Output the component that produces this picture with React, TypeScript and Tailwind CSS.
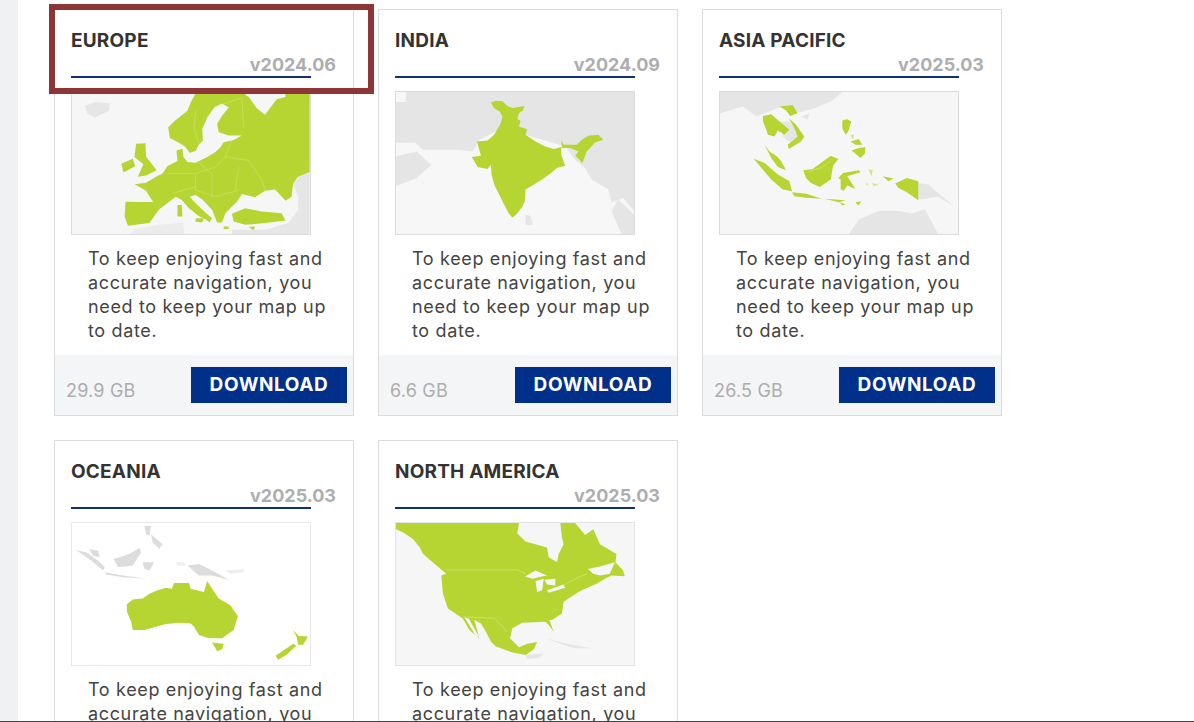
const G = "#b7d532";
const L = "#e5e5e5";
const W = "#d3e67f";

function Frame({ vb, bg, border = "border-[#dcdcdc]", children }: { vb: string; bg: string; border?: string; children: React.ReactNode }) {
  return (
    <div className={`w-[240px] h-[144px] border ${border} ml-[16px] mt-[13px] overflow-hidden`} style={{ background: bg }}>
      <svg viewBox={vb} preserveAspectRatio="none" className="block w-full h-full blur-[0.5px]">
        {children}
      </svg>
    </div>
  );
}

function Europe() {
  const bg = "#f6f6f6";
  return (
    <Frame vb="216 273 720 430" bg={bg}>
      <path fill="#e6e6e6" d="M255 315L290 303L330 308L328 330L285 350L262 338Z" />
      <path fill="#e6e6e6" d="M935 515L905 528L885 550L900 590L900 630L870 670L800 690L700 690L700 703L935 703Z" />
      <path fill="#ececec" d="M390 703L410 688L480 675L552 668L556 703Z" />
      <path fill={G} d="M592 273L575 305L565 330L530 358L507 380L512 412L545 430L560 440L572 457L590 452L600 432L612 420L610 385L625 350L648 318L670 308L690 320L670 345L655 370L660 395L690 405L730 405L705 418L675 425L665 440L650 455L625 470L590 487L565 485L553 470L550 445L532 450L535 482L505 497L490 520L470 530L440 548L405 552L440 572L452 592L462 606L420 606L378 605L375 650L385 678L450 670L480 628L510 605L530 590L548 600L570 625L598 648L622 660L632 668L640 655L622 640L590 610L572 590L590 585L612 600L640 630L655 668L670 668L680 640L700 620L715 605L730 582L770 592L800 572L830 568L862 602L880 590L885 550L900 530L935 515L935 273L860 273L862 288L835 295L800 342L775 322L752 290L730 273Z" />
      <path fill={G} d="M700 642L740 625L790 635L850 640L862 662L800 670L740 675L705 665Z" />
      <path fill={G} d="M410 430L438 428L440 468L472 510L440 526L415 530L432 492L405 470Z" />
      <path fill={G} d="M365 490L400 475L407 498L372 517Z" />
      <path fill={G} d="M535 615L548 615L550 650L535 650ZM592 655L615 655L610 668L588 665ZM675 680L690 680L690 688L675 688ZM750 682L770 680L765 692Z" />
      <path fill={bg} d="M620 405L640 400L640 430L625 440Z" />
      <path fill="none" stroke={W} strokeWidth="1.5" d="M505 520L590 520L650 500L680 470L750 480L790 540L800 570M590 520L590 570L650 590L720 570M680 470L690 440L700 420M600 487L640 520L640 590M520 580L590 560M720 500L710 570M590 330L585 380L600 432M650 318L730 290L735 380" />
    </Frame>
  );
}

function India() {
  return (
    <Frame vb="48 36 720 428" bg="#f7f7f7">
      <path fill={L} d="M78 36L768 36L768 395L735 355L700 370L690 330L640 300L620 265L590 240L560 200L440 165L360 150L300 180L280 215L240 210L130 210L105 190L48 190L48 66L78 66Z" />
      <path fill={L} d="M48 230L110 215L155 255L110 295L48 320Z" />
      <path fill={L} d="M700 395L720 360L768 405L768 464L730 464Z" />
      <path fill={L} d="M440 405L455 410L462 435L440 438Z" />
      <path fill={G} d="M335 68L350 62L370 64L385 78L400 84L437 78L432 92L420 100L415 118L425 122L420 140L445 148L440 165L470 185L500 200L525 208L548 202L548 225L555 245L560 258L535 265L515 282L490 300L460 318L440 330L438 365L430 382L412 405L400 415L388 400L375 375L360 345L345 315L337 285L335 255L325 268L295 262L285 245L277 232L305 228L293 185L325 182L345 165L365 130L370 110L362 95L345 85Z" />
      <path fill={G} d="M548 182L555 195L595 195L610 180L630 168L660 165L675 180L650 188L635 205L625 215L612 250L598 235L590 228L600 215L575 205L550 205Z" />
    </Frame>
  );
}

function Asia() {
  return (
    <Frame vb="60 36 720 428" bg="#f6f6f6">
      <path fill={L} d="M60 36L430 36L400 62L345 85L300 98L250 78L170 110L130 80L60 100Z" />
      <path fill={L} d="M240 125L270 125L315 175L280 195L250 170Z" />
      <path fill={L} d="M308 110L330 100L325 120Z" />
      <path fill={L} d="M660 310L690 315L765 378L720 352L660 360Z" />
      <path fill={L} d="M450 464L480 420L540 395L600 395L640 402L680 390L720 464Z" />
      <path fill={G} d="M240 80L280 75L295 100L272 108L260 92ZM190 108L215 103L240 125L270 150L255 165L235 152L225 170L205 165L200 150L190 125ZM268 115L290 135L315 170L305 185L268 208L265 195L295 170L285 145ZM195 195L210 215L232 230L245 245L260 272L235 262L215 235ZM162 237L195 250L235 285L270 305L278 335L250 330L215 300L190 270Z" />
      <path fill={G} d="M312 272L340 268L365 250L395 228L418 238L402 258L395 300L362 322L335 310L320 295Z" />
      <path fill="none" stroke={W} strokeWidth="2" d="M325 275L365 265L395 245" />
      <path fill={G} d="M278 338L320 343L368 358L320 355L285 350ZM375 358L440 362L420 368ZM422 368L440 375L430 378ZM470 368L488 365L478 378Z" />
      <path fill={G} d="M430 122L445 118L457 125L448 155L440 165L430 145ZM455 185L480 178L490 195L470 195ZM458 212L480 205L500 202L498 222L485 235L470 222Z" />
      <path fill={G} d="M418 295L432 280L480 272L485 278L445 290L470 328L445 318L435 333L425 330L425 300Z" />
      <path fill={G} d="M552 290L585 297L570 305ZM590 312L625 295L660 305L660 362L625 338L600 325Z" />
      <path fill={W} d="M510 270L522 270L518 290ZM500 312L510 312L505 318ZM520 310L540 315L525 320ZM455 165L465 165L462 180Z" />
    </Frame>
  );
}

function Oceania() {
  return (
    <Frame vb="66 36 720 430" bg="#ffffff" border="border-[#e8e8e8]">
      <path fill="#dcdcdc" d="M78 118L110 125L145 150L165 170L160 180L125 150ZM118 115L145 120L150 140L130 135ZM192 145L240 130L270 112L275 125L250 165L205 170ZM165 185L220 195L290 205L220 200L170 192ZM285 45L305 45L300 75L290 70ZM305 70L340 100L330 115L310 95ZM280 155L315 155L300 180L285 175ZM415 165L450 160L500 185L540 208L490 195L450 195Z" />
      <path fill="#eeeeee" d="M380 155L405 155L410 165L385 165ZM530 180L585 175L585 185L545 190Z" />
      <path fill={G} d="M232 282L250 268L280 265L300 250L325 240L350 232L368 235L375 218L400 218L420 218L425 235L465 245L475 212L490 235L510 265L545 285L568 318L555 360L520 385L480 385L450 375L435 350L425 340L395 338L350 342L320 350L285 360L250 360L245 335L232 305Z" />
      <path fill={G} d="M490 398L525 402L520 418L505 424Z" />
      <path fill={G} d="M735 360L752 378L780 380L765 405L750 405L745 380ZM682 438L735 402L745 408L715 435L690 450Z" />
    </Frame>
  );
}

function NorthAmerica() {
  const bg = "#f6f6f6";
  return (
    <Frame vb="48 36 720 430" bg={bg} border="border-[#e4e4e4]">
      <path fill="#e6e6e6" d="M440 435L495 432L480 445L445 448ZM500 385L560 400L600 408L640 415L590 415L540 400Z" />
      <path fill={G} d="M48 36L420 36L415 68L440 92L505 110L510 140L535 155L540 130L555 100L550 80L545 36L590 36L620 72L645 55L665 100L715 130L712 155L735 180L740 197L700 195L680 205L655 220L620 235L600 245L570 265L555 275L550 310L520 330L512 330L525 365L510 345L500 335L430 338L400 355L393 385L420 412L445 402L475 396L465 418L440 436L400 428L350 410L335 395L320 365L305 340L285 330L300 385L270 360L250 325L205 295L190 250L185 195L200 190L165 160L130 130L120 110L100 85L70 65L48 55Z" />
      <path fill={bg} d="M255 322L268 325L300 382L290 378Z" />
      <path fill={bg} d="M438 198L470 180L505 195L478 200L462 205ZM470 212L495 205L490 240L475 245ZM497 208L530 205L530 225L505 222ZM505 240L555 222L560 232L510 247Z" />
      <path fill={bg} d="M628 175L665 168L710 155L695 190L665 195L645 190Z" />
      <path fill="none" stroke={W} strokeWidth="2" d="M200 178L415 178L440 190M555 225L600 200L625 190M250 320L345 325L385 365" />
    </Frame>
  );
}

function Card({ name, version, size, map }: { name: string; version: string; size?: string; map: React.ReactNode }) {
  return (
    <div className="relative w-[300px] h-[407px] border border-[#dcdcdc] bg-white flex flex-col">
      <div className="ml-[16px] w-[240px] h-[68px] border-b-2 border-[#0f2f78] relative">
        <h2 className="pt-[20px] text-[19px] leading-[22px] font-bold text-[#333333] tracking-[0.2px]">{name}</h2>
        <div className="absolute right-[-25px] top-[44px] text-[18px] leading-[22px] font-bold text-[#aeaeae]">{version}</div>
      </div>
      {map}
      <p className="ml-[33px] mt-[12px] w-[250px] text-[18px] leading-[24px] text-[#444444] tracking-[0.65px]">
        To keep enjoying fast and accurate navigation, you need to keep your map up to date.
      </p>
      <div className="mt-auto h-[60px] bg-[#f4f5f6] flex items-start justify-between pl-[11px] pr-[6px] pt-[12px]">
        <span className="pt-[12px] text-[18px] leading-[24px] text-[#adadad] tracking-[0.2px]">{size}</span>
        <button className="w-[156px] h-[36px] bg-[#00308a] text-white text-[19px] font-bold leading-[36px] text-center tracking-[0.6px]">DOWNLOAD</button>
      </div>
    </div>
  );
}

export default function App() {
  return (
    <div className="h-[722px] flex flex-col overflow-hidden bg-white" style={{ fontFamily: "Inter, 'Liberation Sans', sans-serif" }}>
      <div className="flex flex-1 min-h-0 overflow-hidden">
        <div className="w-[18px] bg-[#f0f1f3] shrink-0" />
        <div className="relative flex-1 pl-[36px] pt-[9px]">
          <div className="grid grid-cols-[repeat(3,300px)] gap-x-[24px] gap-y-[24px]">
            <Card name="EUROPE" version="v2024.06" size="29.9 GB" map={<Europe />} />
            <Card name="INDIA" version="v2024.09" size="6.6 GB" map={<India />} />
            <Card name="ASIA PACIFIC" version="v2025.03" size="26.5 GB" map={<Asia />} />
            <Card name="OCEANIA" version="v2025.03" map={<Oceania />} />
            <Card name="NORTH AMERICA" version="v2025.03" map={<NorthAmerica />} />
          </div>
          <div className="absolute left-[31px] top-[4px] w-[325px] h-[90px] border-[6px] border-[#8e3636] pointer-events-none" />
        </div>
      </div>
      <div className="h-px bg-[#444444] shrink-0" />
    </div>
  );
}
